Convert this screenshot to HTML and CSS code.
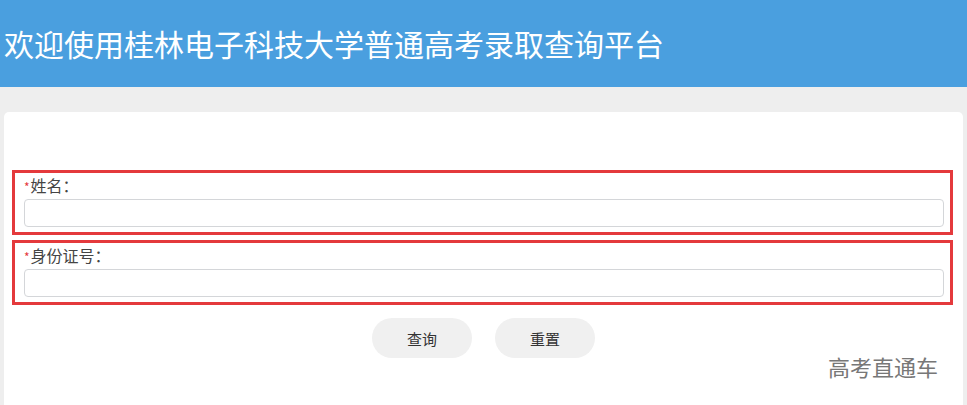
FILE: index.html
```html
<!DOCTYPE html>
<html lang="zh-CN">
<head>
<meta charset="utf-8">
<title>桂林电子科技大学普通高考录取查询平台</title>
<link rel="stylesheet" href="styles.css">
</head>
<body>
<header class="header">
  <h1 class="title">欢迎使用桂林电子科技大学普通高考录取查询平台</h1>
</header>
<main class="page">
  <section class="card">
    <form class="form">
      <div class="field">
        <label class="label"><span class="req">*</span>姓名：</label>
        <input class="input" type="text">
      </div>
      <div class="field">
        <label class="label"><span class="req">*</span>身份证号：</label>
        <input class="input" type="text">
      </div>
      <div class="actions">
        <button type="button" class="btn">查询</button>
        <button type="button" class="btn">重置</button>
      </div>
    </form>
    <div class="link">高考直通车</div>
  </section>
</main>
</body>
</html>
```
FILE: styles.css
```css
html, body {
  margin: 0;
  padding: 0;
  background: #eeeeee;
  font-family: "Noto Sans CJK SC", "Noto Sans", sans-serif;
  color: #333;
  height: 100%;
  overflow: hidden;
}
.header {
  background: #4a9fdf;
  height: 87px;
  display: flex;
  align-items: center;
}
.title {
  margin: 0;
  padding-left: 4px;
  color: #ffffff;
  font-weight: normal;
  font-size: 30px;
  line-height: 40px;
  position: relative;
  top: -1px;
}
.page {
  padding: 25px 4px 0 4px;
}
.card {
  background: #ffffff;
  border-radius: 5px;
  padding: 58px 10px 40px 8px;
  min-height: 300px;
}
.form {
  display: flex;
  flex-direction: column;
  gap: 5px;
}
.field {
  border: 3px solid #e4393c;
  padding: 0 6px 5px 9px;
}
.label {
  display: block;
  font-size: 16px;
  line-height: 24px;
  height: 24px;
  margin-bottom: 2px;
  color: #444;
}
.req {
  color: #e4393c;
  font-size: 12px;
  margin-right: 1px;
}
.input {
  display: block;
  box-sizing: border-box;
  width: 100%;
  height: 28px;
  border: 1px solid #d4d6d9;
  border-radius: 4px;
  margin: 0;
  padding: 0 8px;
  font: inherit;
  outline: none;
}
.actions {
  display: flex;
  justify-content: center;
  gap: 23px;
  margin-top: 8px;
  padding-left: 2px;
}
.btn {
  width: 100px;
  height: 40px;
  border: none;
  border-radius: 20px;
  background: #f0f0f0;
  color: #333;
  font-family: inherit;
  font-size: 15px;
}
.link {
  text-align: right;
  font-size: 22px;
  color: #777;
  line-height: 30px;
  margin-top: -7px;
  padding-right: 15px;
}
```
